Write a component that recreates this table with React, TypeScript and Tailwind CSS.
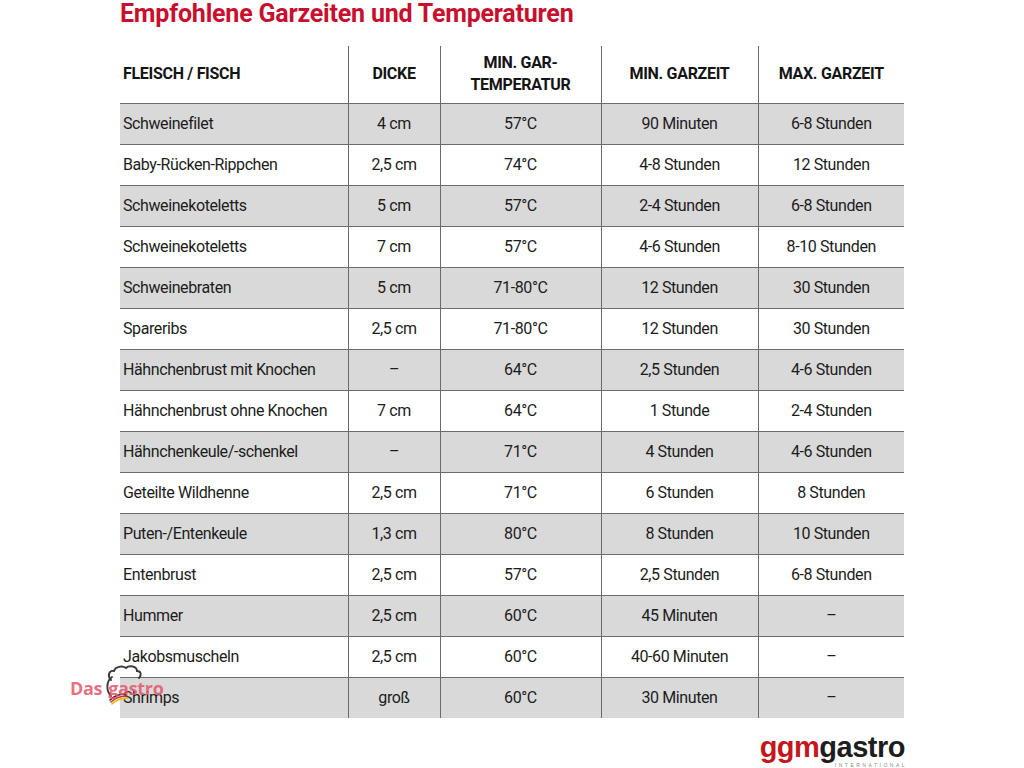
import * as React from 'react';

const rows: [string, string, string, string, string][] = [
  ['Schweinefilet', '4 cm', '57°C', '90 Minuten', '6-8 Stunden'],
  ['Baby-Rücken-Rippchen', '2,5 cm', '74°C', '4-8 Stunden', '12 Stunden'],
  ['Schweinekoteletts', '5 cm', '57°C', '2-4 Stunden', '6-8 Stunden'],
  ['Schweinekoteletts', '7 cm', '57°C', '4-6 Stunden', '8-10 Stunden'],
  ['Schweinebraten', '5 cm', '71-80°C', '12 Stunden', '30 Stunden'],
  ['Spareribs', '2,5 cm', '71-80°C', '12 Stunden', '30 Stunden'],
  ['Hähnchenbrust mit Knochen', '–', '64°C', '2,5 Stunden', '4-6 Stunden'],
  ['Hähnchenbrust ohne Knochen', '7 cm', '64°C', '1 Stunde', '2-4 Stunden'],
  ['Hähnchenkeule/-schenkel', '–', '71°C', '4 Stunden', '4-6 Stunden'],
  ['Geteilte Wildhenne', '2,5 cm', '71°C', '6 Stunden', '8 Stunden'],
  ['Puten-/Entenkeule', '1,3 cm', '80°C', '8 Stunden', '10 Stunden'],
  ['Entenbrust', '2,5 cm', '57°C', '2,5 Stunden', '6-8 Stunden'],
  ['Hummer', '2,5 cm', '60°C', '45 Minuten', '–'],
  ['Jakobsmuscheln', '2,5 cm', '60°C', '40-60 Minuten', '–'],
  ['Shrimps', 'groß', '60°C', '30 Minuten', '–'],
];

// "Das gastro" watermark with the chef hat and flag swoosh
function Watermark() {
  return (
    <div className="absolute left-[68px] top-[664px] w-[100px] h-[46px] pointer-events-none">
      <svg className="absolute left-[32px] top-0" width="50" height="46" viewBox="0 0 50 46" fill="none">
        <path
          d="M11 16 C7 12 9 6 14 7 C15 3 22 1 26 4 C29 1 37 2 37 7 C41 7 42 11 39 14"
          stroke="#3a3a3a"
          strokeWidth="1.9"
          strokeLinecap="round"
        />
        <path d="M12 13 C6 17 6 27 11 32" stroke="#3a3a3a" strokeWidth="1.9" strokeLinecap="round" />
        <path d="M10 36 C14 32 19 30 26 30" stroke="#222" strokeWidth="1.5" strokeLinecap="round" />
        <path d="M11 38 C15 34 20 32 27 32" stroke="#d42a2a" strokeWidth="1.5" strokeLinecap="round" />
        <path d="M12 40 C16 36 21 34 28 34" stroke="#e8b400" strokeWidth="1.5" strokeLinecap="round" />
      </svg>
      <div className="absolute left-[2px] top-[15px] flex gap-[6px] text-[18px] font-bold leading-none text-[#e2566a]/85 font-['Open_Sans',sans-serif] tracking-[-0.3px]">
        <span>Das</span>
        <span>gastro</span>
      </div>
    </div>
  );
}

export default function App() {
  return (
    <div className="relative w-[1024px] h-[768px] bg-white overflow-hidden font-['Roboto',sans-serif] text-[#1c1c1c]">
      <div className="pl-[120px] h-[46px] pt-[1px]">
        <h1 className="text-[25px] leading-[25px] font-bold text-[#c8102e] tracking-[-0.2px]">
          Empfohlene Garzeiten und Temperaturen
        </h1>
      </div>

      <table className="ml-[120px] w-[784px] border-collapse table-fixed">
        <colgroup>
          <col className="w-[228px]" />
          <col className="w-[92px]" />
          <col className="w-[161px]" />
          <col className="w-[157px]" />
          <col className="w-[146px]" />
        </colgroup>
        <thead>
          <tr className="h-[57px] border-b-[1.5px] border-[#6b6b6b] text-[16px] leading-[22px] text-[#141414] tracking-[-0.3px]">
            <th className="text-left pl-[3px] font-bold">FLEISCH / FISCH</th>
            <th className="border-l border-[#6b6b6b] font-bold">DICKE</th>
            <th className="border-l border-[#6b6b6b] font-bold">
              MIN. GAR-
              <br />
              TEMPERATUR
            </th>
            <th className="border-l border-[#6b6b6b] font-bold">MIN. GARZEIT</th>
            <th className="border-l border-[#6b6b6b] font-bold">MAX. GARZEIT</th>
          </tr>
        </thead>
        <tbody>
          {rows.map((r, i) => (
            <tr
              key={i}
              className={
                'h-[41px] text-[16px] tracking-[-0.4px] ' +
                (i % 2 === 0 ? 'bg-[#d9d9d9] ' : 'bg-white ') +
                (i < rows.length - 1 ? 'border-b-[1.5px] border-[#6b6b6b]' : '')
              }
            >
              <td className="pl-[3px] text-left">{r[0]}</td>
              <td className="border-l border-[#6b6b6b] text-center">{r[1]}</td>
              <td className="border-l border-[#6b6b6b] text-center">{r[2]}</td>
              <td className="border-l border-[#6b6b6b] text-center">{r[3]}</td>
              <td className="border-l border-[#6b6b6b] text-center">{r[4]}</td>
            </tr>
          ))}
        </tbody>
      </table>

      <Watermark />

      <div className="absolute left-[760px] top-[733px] flex flex-col items-end w-[145px]">
        <div className="text-[29px] leading-[29px] font-bold tracking-[-0.5px] font-['Liberation_Sans',sans-serif]">
          <span className="text-[#c4161c]">ggm</span>
          <span className="text-[#1d1d1d]">gastro</span>
        </div>
        <div className="text-[5px] leading-[6px] tracking-[2.5px] text-[#8a8a8a] font-['Liberation_Sans',sans-serif] -mr-[2px]">
          INTERNATIONAL
        </div>
      </div>
    </div>
  );
}
